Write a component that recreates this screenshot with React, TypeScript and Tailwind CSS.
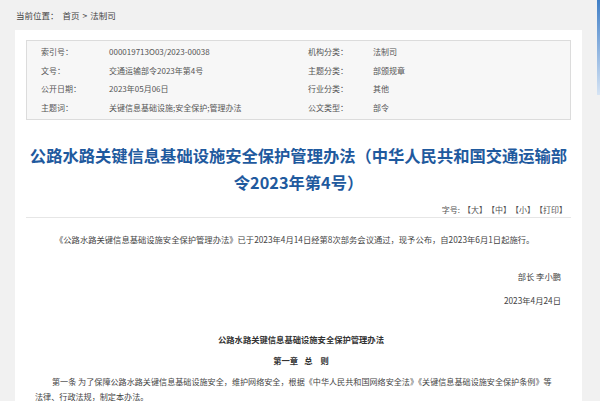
const meta = [
  ["索引号：", "000019713O03/2023-00038", "机构分类：", "法制司"],
  ["文号：", "交通运输部令2023年第4号", "主题分类：", "部颁规章"],
  ["公开日期：", "2023年05月06日", "行业分类：", "其他"],
  ["主题词：", "关键信息基础设施;安全保护;管理办法", "公文类型：", "部令"],
];

export default function App() {
  return (
    <div className="relative h-[401px] w-[600px] overflow-hidden bg-[#f1f1f1] font-['Noto_Sans_CJK_SC',sans-serif] text-[#444]">
      {/* side widget edge */}
      <div className="absolute right-0 top-0 h-[95px] w-[3px] bg-gradient-to-b from-[#3f7fc6] to-[#d6e4f4]" />

      <div className="flex h-[30px] items-center pl-[16px] text-[8.5px] text-[#444]">
        <span>当前位置：</span>
        <span className="ml-[4px]">首页</span>
        <span className="mx-[3px]">&gt;</span>
        <span>法制司</span>
      </div>

      <div className="mx-[15px] h-[371px] w-[567px] bg-white px-[11px] pt-[10px]">
        <div className="border border-[#dcdcdc] bg-[#f7f7f7] py-[2px] pl-[14px]">
          {meta.map((r, i) => (
            <div key={i} className="grid h-[18.5px] grid-cols-[68px_199px_65px_1fr] items-center text-[8px] text-[#555]">
              <span>{r[0]}</span>
              <span>{r[1]}</span>
              <span>{r[2]}</span>
              <span>{r[3]}</span>
            </div>
          ))}
        </div>

        <h1 className="mt-[22px] text-center text-[16.3px] font-bold leading-[27px] text-[#1f5a9e]">
          公路水路关键信息基础设施安全保护管理办法（中华人民共和国交通运输部令2023年第4号）
        </h1>

        <div className="mt-[7px] flex h-[15px] items-center justify-end border-b border-[#e6e6e6] pb-[1px] pr-[4px] text-[8px] text-[#555]">
          <span className="mr-[3px]">字号:</span>
          <span>【大】</span>
          <span>【中】</span>
          <span>【小】</span>
          <span>【打印】</span>
        </div>

        <div className="pl-[9px] pr-[4px] text-[8.3px] text-[#444]">
          <p className="mt-[14px] pl-[20px] leading-[14px]">
            《公路水路关键信息基础设施安全保护管理办法》已于2023年4月14日经第8次部务会议通过，现予公布，自2023年6月1日起施行。
          </p>
          <p className="mt-[23px] pr-[6px] text-right leading-[14px]">部长 李小鹏</p>
          <p className="mt-[10px] pr-[6px] text-right leading-[14px]">2023年4月24日</p>
          <p className="mt-[25px] text-center font-bold leading-[14px] text-[#333]">公路水路关键信息基础设施安全保护管理办法</p>
          <p className="mt-[7px] text-center font-bold leading-[14px] text-[#333]">
            第一章<span className="ml-[6px]">总</span><span className="ml-[8px]">则</span>
          </p>
          <p className="mt-[7px] indent-[17px] text-[8.1px] leading-[15px]">
            第一条 为了保障公路水路关键信息基础设施安全，维护网络安全，根据《中华人民共和国网络安全法》《关键信息基础设施安全保护条例》等
            <br />
            法律、行政法规，制定本办法。
          </p>
        </div>
      </div>
    </div>
  );
}
